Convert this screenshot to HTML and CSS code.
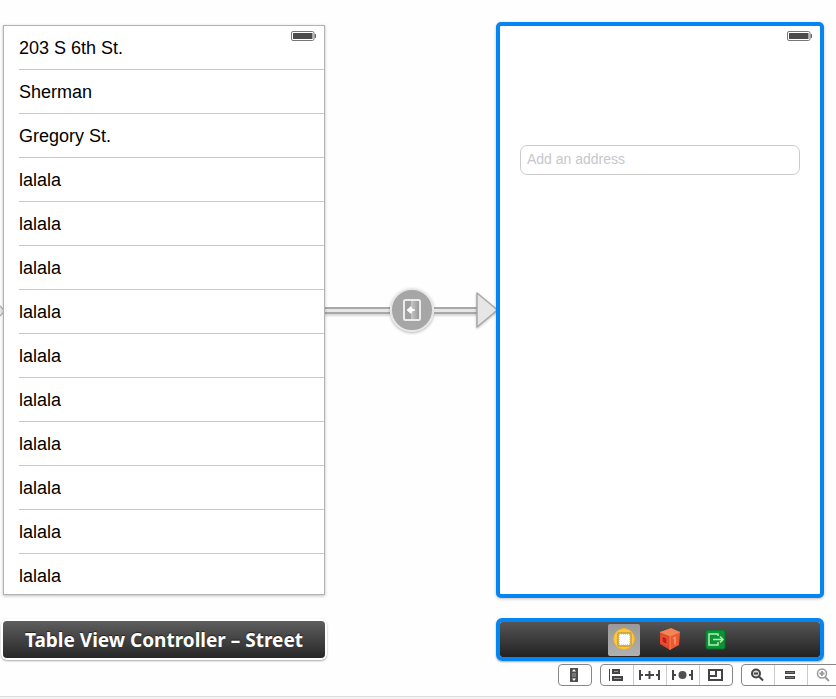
FILE: index.html
```html
<!DOCTYPE html>
<html lang="en">
<head>
<meta charset="utf-8">
<title>Storyboard</title>
<link rel="stylesheet" href="styles.css">
</head>
<body>
<main class="storyboard">
  <section class="scene">
    <svg class="battery" viewBox="0 0 25 10" aria-hidden="true"><rect x=".5" y=".5" width="22.500" height="9" rx="1.5" fill="#fff" stroke="#777"/><rect x="2" y="2" width="19.500" height="6" rx=".5" fill="#4b4b4b"/><path d="M24 3l1 1v2l-1 1z" fill="#555" stroke="#666" stroke-width=".6"/></svg>
    <ul class="rows">
      <li>203 S 6th St.</li>
      <li>Sherman</li>
      <li>Gregory St.</li>
      <li>lalala</li>
      <li>lalala</li>
      <li>lalala</li>
      <li>lalala</li>
      <li>lalala</li>
      <li>lalala</li>
      <li>lalala</li>
      <li>lalala</li>
      <li>lalala</li>
      <li>lalala</li>
    </ul>
  </section>

  <div class="segue">
    <span class="line line-long"></span>
    <svg class="node" viewBox="0 0 44 44" role="img" aria-label="Segue">
      <defs><linearGradient id="door"><stop offset="0" stop-color="#c8c8c8"/><stop offset="1" stop-color="#989898"/></linearGradient></defs>
      <circle cx="22" cy="22" r="21" fill="#a6a6a6" stroke="#e6e6e6" stroke-width="2"/>
      <rect x="14" y="12" width="16" height="20" fill="#a0a0a0"/>
      <rect x="21" y="12" width="8" height="20" fill="url(#door)"/>
      <rect x="14" y="12" width="16" height="20" rx="1.5" fill="none" stroke="#ececec" stroke-width="2"/>
      <path d="M17 22l4-3.500 1 2.500 3 1-3 1-1 2.500z" fill="#fff" stroke="#fff" stroke-width=".8"/>
    </svg>
    <span class="line line-short"></span>
    <svg class="head" viewBox="0 0 22 36" aria-hidden="true"><path d="M1 1v34L21.500 18z" fill="#e6e6e6" stroke="#a8a8a8" stroke-width="1.500" stroke-linejoin="round"/></svg>
  </div>

  <section class="scene selected">
    <svg class="battery" viewBox="0 0 25 10" aria-hidden="true"><rect x=".5" y=".5" width="22.500" height="9" rx="1.5" fill="#fff" stroke="#777"/><rect x="2" y="2" width="19.500" height="6" rx=".5" fill="#4b4b4b"/><path d="M24 3l1 1v2l-1 1z" fill="#555" stroke="#666" stroke-width=".6"/></svg>
    <input class="address" type="text" placeholder="Add an address" aria-label="Add an address">
  </section>

  <div class="dock dock-title">Table View Controller – Street</div>
  <div class="dock dock-selected">
    <button class="item active" aria-label="View Controller"><svg viewBox="0 0 32 32"><circle cx="16" cy="15" r="10.500" fill="#fdc93c" stroke="#e9b02c"/><rect x="10" y="9" width="13" height="13" rx="1" fill="#fff" stroke="#c99c35" stroke-width="1.500"/><rect x="11" y="10" width="11" height="11" fill="none" stroke="#c9a658" stroke-dasharray="1 1"/></svg></button>
    <button class="item" aria-label="First Responder"><svg viewBox="0 0 32 32"><path d="M6 8l11-4 9 4-10 4z" fill="#f58452"/><path d="M6 8l10 4v14L6 20z" fill="#e2472b"/><path d="M16 12l10-4-1 13-9 5z" fill="#ee5932"/><path d="M8 12l5 2v7l-5-3z" fill="#c91f12" stroke="#ee6a45" stroke-width=".8"/><path d="M19 14.500l2-1v7" stroke="#f9a484" stroke-width="1.300" fill="none"/><path d="M6 8l10 4 10-4M16 12v14" stroke="#fa9668" stroke-width=".7" fill="none"/></svg></button>
    <button class="item" aria-label="Exit"><svg viewBox="0 0 32 32"><rect x="6" y="6" width="19" height="19" rx="2" fill="#0b9436" stroke="#06722a"/><path d="M18 12v-2H9v11h9v-3M13 15.500h9M20 12.500l3 3-3 3" fill="none" stroke="#b2efb2" stroke-width="1.500"/></svg></button>
  </div>
</main>

<div class="toolbar">
  <div class="group">
    <button aria-label="Form factor"><svg viewBox="0 0 32 20"><rect x="11" y="3" width="8" height="14" fill="#4d4d4d"/><path d="M13 6.500L15 4l2 2.500zM13 13.500h4L15 16z" fill="#fff"/><rect x="13" y="8" width="4" height="4" fill="#777"/></svg></button>
  </div>
  <div class="group">
    <button aria-label="Align"><svg viewBox="0 0 32 20"><path d="M8.500 4v12" stroke="#444"/><path d="M12 5h6v3h-6zM12 12h9v3h-9z" fill="#999" stroke="#444" stroke-width="2"/></svg></button>
    <button aria-label="Pin"><svg viewBox="0 0 32 20"><path d="M6 5v10M25 5v10M6 10h3M22 10h3M11 10h9M15.500 6v8" fill="none" stroke="#444" stroke-width="2"/></svg></button>
    <button aria-label="Resolve"><svg viewBox="0 0 32 20"><path d="M6 5v10M25 5v10M6 10h3M22 10h3" fill="none" stroke="#444" stroke-width="2"/><circle cx="15.500" cy="10" r="4" fill="#505050"/></svg></button>
    <button aria-label="Resizing"><svg viewBox="0 0 32 20"><path d="M9 5h13v10H9zM9 11h7V5" fill="none" stroke="#444" stroke-width="2"/></svg></button>
  </div>
  <div class="group">
    <button aria-label="Zoom out"><svg viewBox="0 0 32 20"><circle cx="14" cy="8.500" r="4" fill="#ddd" stroke="#444" stroke-width="2"/><path d="M12 8.500h4M17 11.500l4 4" stroke="#444" stroke-width="2"/></svg></button>
    <button aria-label="Actual size"><svg viewBox="0 0 32 20"><path d="M10 7.500h10M10 12.500h10" stroke="#444" stroke-width="3"/><path d="M11 7.500h8M11 12.500h8" stroke="#777"/></svg></button>
    <button aria-label="Zoom in"><svg viewBox="0 0 32 20"><circle cx="14" cy="8.500" r="4.500" fill="none" stroke="#999" stroke-width="1.500"/><path d="M11.500 8.500h5M14 6v5M17 12l4 4" stroke="#999" stroke-width="1.800"/></svg></button>
  </div>
</div>
<footer class="edge"></footer>
</body>
</html>
```
FILE: styles.css
```css
* { box-sizing: border-box; }

body {
  margin: 0;
  background: #fefefe;
  font-family: "Liberation Sans", Arial, sans-serif;
  color: #000;
  overflow-x: hidden;
}

button {
  margin: 0;
  padding: 0;
  border: 0;
  background: none;
}

svg { display: block; }

.storyboard {
  position: relative;
  display: grid;
  grid-template-columns: 322px minmax(120px, 1fr) 328px;
  row-gap: 20px;
  align-items: center;
  padding: 22px 12px 0 3px;
}

/* tip of the entry arrow that comes in from the left */
.storyboard::before {
  content: "";
  position: absolute;
  left: -4px;
  top: 307px;
  width: 6px;
  height: 6px;
  border: 1px solid #a8a8a8;
  background: #e6e6e6;
  transform: rotate(45deg);
}

.scene {
  position: relative;
  height: 570px;
  border: 1px solid #b2b2b2;
  background: #fff;
  box-shadow: 0 1px 3px rgba(0, 0, 0, 0.25);
  overflow: hidden;
}

.selected {
  z-index: 1;
  height: 576px;
  padding: 119px 20px 0;
  border: 4px solid #0584f2;
  border-radius: 5px;
}

.battery {
  position: absolute;
  top: 5px;
  right: 8px;
  width: 25px;
  height: 10px;
}

.rows {
  margin: 0;
  padding: 0 0 0 15px;
  list-style: none;
  font-size: 18px;
}

.rows li {
  height: 44px;
  border-bottom: 1px solid #c8c7cc;
  line-height: 44px;
}

.address {
  display: block;
  width: 100%;
  height: 30px;
  padding: 0 6px 2px;
  border: 1px solid #ccc;
  border-radius: 7px;
  background: #fff;
  font: 14px "Liberation Sans", Arial, sans-serif;
}

.address::placeholder { color: #c7c7cc; opacity: 1; }

.segue {
  display: flex;
  align-items: center;
  margin-right: -2px;
}

.line {
  height: 7px;
  border: solid #a8a8a8;
  border-width: 2px 0;
  background: #e6e6e6;
  box-shadow: 0 2px 2px rgba(0, 0, 0, 0.15);
}

.line-long { flex: 65 1 0; }
.line-short { flex: 43 1 0; }

.node {
  width: 44px;
  height: 44px;
  border-radius: 50%;
  box-shadow: 0 1px 3px rgba(0, 0, 0, 0.3);
}

.head {
  width: 22px;
  height: 36px;
  margin-left: -1px;
  filter: drop-shadow(0 1px 1px rgba(0, 0, 0, 0.25));
}

.dock {
  display: flex;
  align-items: center;
  justify-content: center;
}

.dock-title {
  height: 37px;
  border-radius: 4px;
  background: linear-gradient(#5e5e5e, #272727);
  box-shadow: 0 0 0 2px #fff, 0 1px 2px 2px rgba(0, 0, 0, 0.35);
  color: #fff;
  font: bold 19px "Noto Sans", "Open Sans", sans-serif;
  text-shadow: 0 -1px 1px #222;
  white-space: nowrap;
}

.dock-selected {
  grid-column: 3;
  gap: 14px;
  height: 43px;
  padding-left: 20px;
  border: 4px solid #0584f2;
  border-radius: 6px;
  background: linear-gradient(#555, #222) padding-box;
  box-shadow: 0 1px 2px rgba(0, 0, 0, 0.35);
}

.item {
  width: 32px;
  height: 32px;
  border-radius: 2px;
}

.active { background: linear-gradient(#999, #b0b0b0); }

.toolbar {
  display: flex;
  justify-content: flex-end;
  gap: 8px;
  margin: 3px -5px 0 0;
}

.group {
  display: flex;
  height: 22px;
  border: 1px solid #868686;
  border-radius: 4px;
  background: #fff;
}

.group button { width: 32px; }

.group button + button {
  width: 33px;
  border-left: 1px solid #ccc;
}

.group svg { width: 32px; height: 20px; }

.edge {
  height: 3px;
  margin-top: 10px;
  border-top: 1px solid #ddd;
  background: #f3f3f3;
}
```
